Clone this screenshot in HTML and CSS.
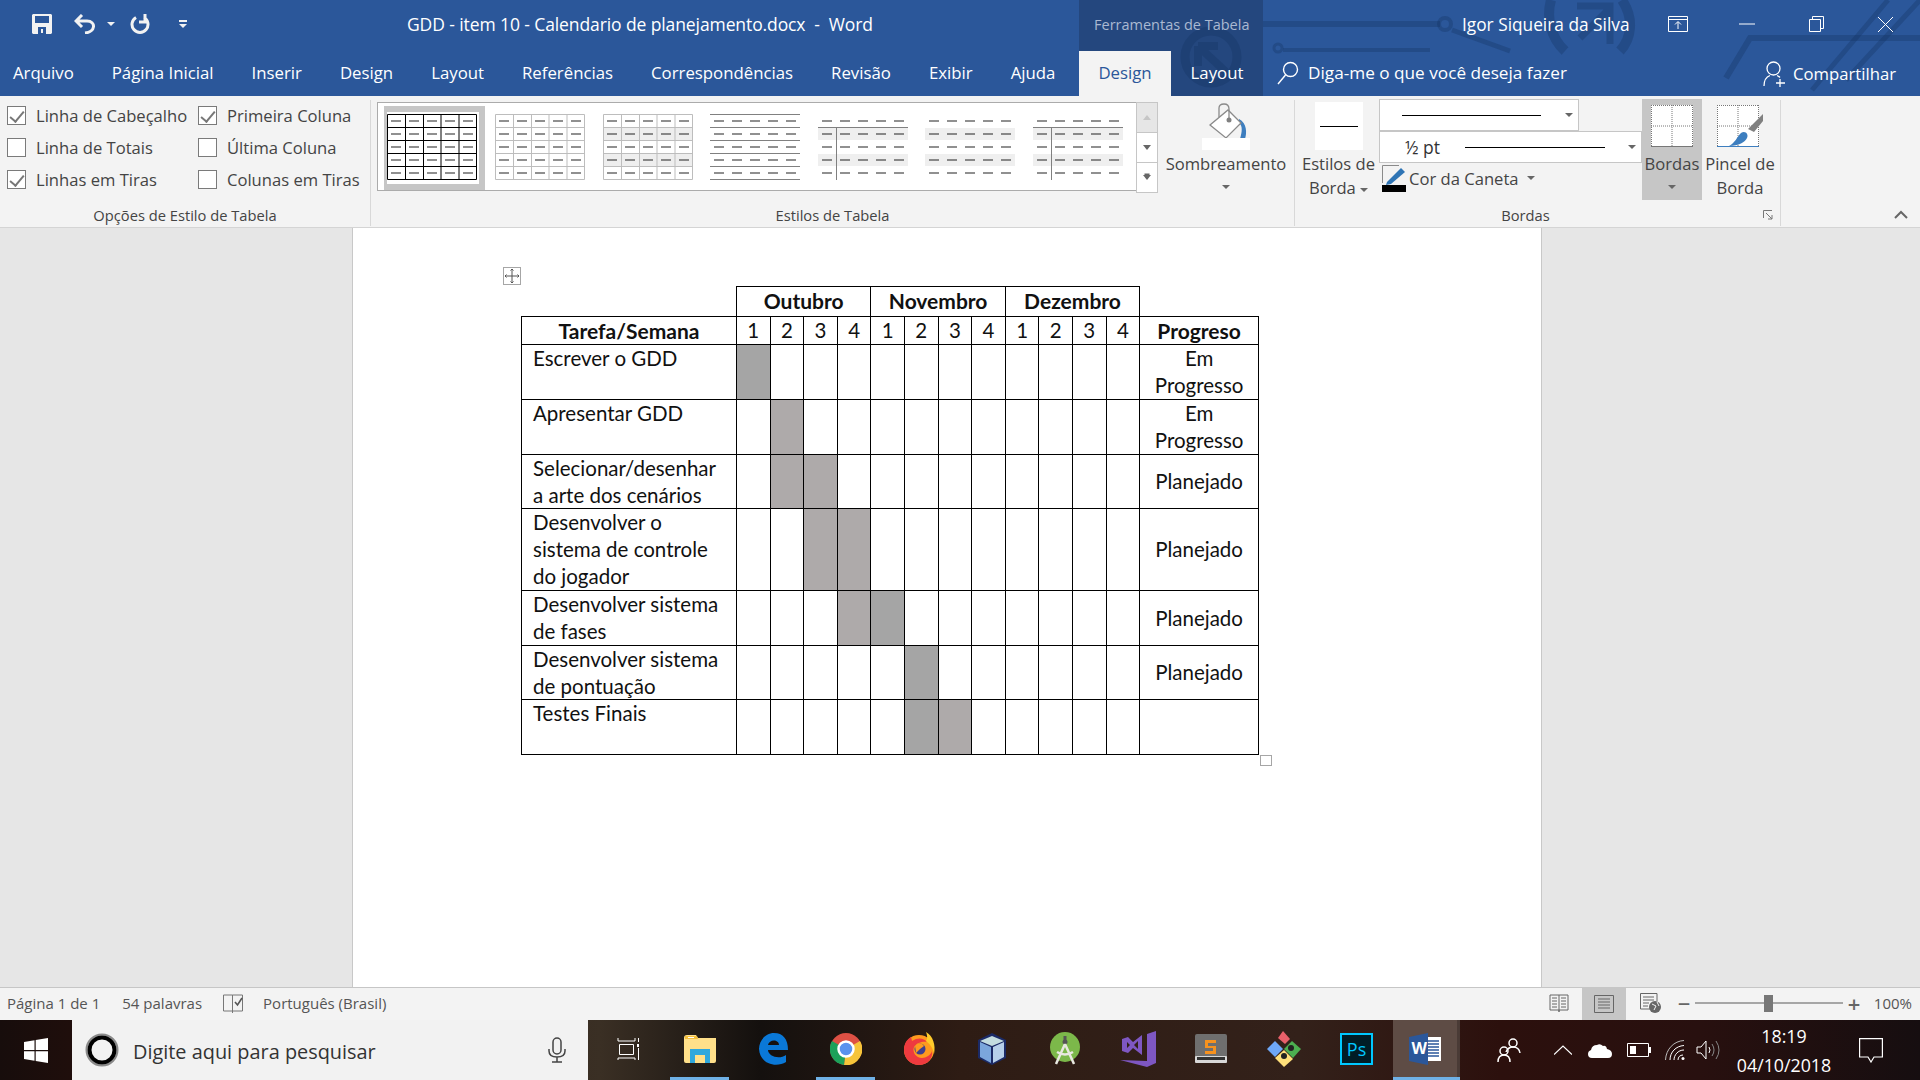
FILE: index.html
```html
<!DOCTYPE html>
<html lang="pt-BR">

<head>
    <meta charset="UTF-8">
    <title>GDD - item 10 - Calendario de planejamento.docx - Word</title>
    <link rel="stylesheet" href="styles.css">
</head>

<body>
    <svg class="defs" width="0" height="0">
        <defs>
            <symbol id="dashes" viewBox="0 0 90 66">
                <path d="M4 7H88M4 20H88M4 33H88M4 46H88M4 59H88" stroke="#222" stroke-width="1.2" stroke-dasharray="10 8" fill="none" />
            </symbol>
        </defs>
    </svg>

    <header class="head">
        <div class="ctx-bg"></div>
        <svg class="circuit" width="1920" height="96" viewBox="0 0 1920 96" fill="none" stroke="#14325f" stroke-opacity="0.32" stroke-width="5">
            <path d="M1263 24H1440" stroke-width="6" />
            <circle cx="1445" cy="24" r="6" stroke-width="4" />
            <path d="M1452 30L1510 51" />
            <circle cx="1211" cy="57" r="26" stroke-width="9" />
            <path d="M1226 72L1198 46M1198 46H1218M1198 46V66" stroke-width="8" />
            <path d="M1283 50H1430" stroke-width="4" />
            <circle cx="1278" cy="48" r="4" stroke-width="3" />
            <path d="M1551 0C1546 18 1551 38 1565 51M1622 0C1634 18 1632 38 1620 51" stroke-width="10" />
            <path d="M1577 6H1610V44M1610 8L1580 38" stroke-width="7" />
            <path d="M1920 38H1750L1726 78" stroke-width="6" />
            <path d="M1920 0L1846 80M1888 0L1812 90" stroke-width="5" />
        </svg>

        <div class="titlebar">
            <div class="qat">
                <svg class="qat-save" width="20" height="20" viewBox="0 0 20 20"><path fill="#f2f2f2" fill-rule="evenodd" d="M1 0H19L20 1V19L19 20H1L0 19V1ZM3 2V9H17V2ZM6 13V20H14V13ZM9 15H11V19H9Z" /></svg>
                <svg class="qat-undo" width="22" height="20" viewBox="0 0 22 20" fill="none" stroke="#f2f2f2" stroke-width="3"><path d="M8 1L2 7L8 13M2 7H13C22 7 22 18 11 19" /></svg>
                <span class="caret caret-light qat-caret"></span>
                <svg class="qat-redo" width="20" height="20" viewBox="0 0 20 20" fill="none" stroke="#f2f2f2" stroke-width="3"><path d="M6 3.5A8 8 0 1 0 14 3.5M15 0V8H9" /></svg>
                <span class="qat-more"></span>
            </div>
            <div class="doc-title">GDD - item 10 - Calendario de planejamento.docx&nbsp; - &nbsp;Word</div>
            <div class="ctx-title">Ferramentas de Tabela</div>
            <div class="user">Igor Siqueira da Silva</div>
            <div class="winbtns">
                <svg width="20" height="16" viewBox="0 0 20 16" fill="none" stroke="#fff"><path d="M.5.5H19.5V15.5H.5ZM.5 3.5H19.5M10 13V6M7 8.5L10 5.5L13 8.5" /></svg>
                <svg class="win-min" width="16" height="2" viewBox="0 0 16 2"><path d="M0 1H16" stroke="#fff" /></svg>
                <svg class="win-max" width="15" height="16" viewBox="0 0 15 16" fill="none" stroke="#fff"><path d="M.5 3.5H11.5V15.5H.5ZM3.5 3.5V.5H14.5V12.5H11.5" /></svg>
                <svg class="win-close" width="15" height="15" viewBox="0 0 15 15"><path d="M0 0L15 15M15 0L0 15" stroke="#fff" /></svg>
            </div>
        </div>

        <nav class="tabs">
            <div class="tabs-main">
                <span class="tab">Arquivo</span>
                <span class="tab">Página Inicial</span>
                <span class="tab">Inserir</span>
                <span class="tab">Design</span>
                <span class="tab">Layout</span>
                <span class="tab">Referências</span>
                <span class="tab">Correspondências</span>
                <span class="tab">Revisão</span>
                <span class="tab">Exibir</span>
                <span class="tab">Ajuda</span>
            </div>
            <span class="ctx-tab active">Design</span>
            <span class="ctx-tab">Layout</span>
            <div class="tell">
                <svg width="22" height="24" viewBox="0 0 22 24" fill="none" stroke="#fff" stroke-width="1.4"><circle cx="13.5" cy="8.5" r="7" /><path d="M8.5 14L1 23" /></svg>
                <span>Diga-me o que você deseja fazer</span>
            </div>
            <div class="share">
                <svg width="22" height="26" viewBox="0 0 22 26" fill="none" stroke="#fff" stroke-width="1.3"><circle cx="10.5" cy="7.5" r="6.5" /><path d="M1 25C1 19 3 16 7 14.5M14 14.5C15 15 16 15.500 17 16.500M17 18V26M13 22H22" /></svg>
                <span>Compartilhar</span>
            </div>
        </nav>
    </header>

    <section class="ribbon">
        <div class="group group-opts">
            <div class="group-body opts">
                <label class="opt"><i class="box on"></i>Linha de Cabeçalho</label>
                <label class="opt"><i class="box on"></i>Primeira Coluna</label>
                <label class="opt"><i class="box"></i>Linha de Totais</label>
                <label class="opt"><i class="box"></i>Última Coluna</label>
                <label class="opt"><i class="box on"></i>Linhas em Tiras</label>
                <label class="opt"><i class="box"></i>Colunas em Tiras</label>
            </div>
            <div class="group-label">Opções de Estilo de Tabela</div>
        </div>

        <div class="group group-styles">
            <div class="group-body styles-body">
                <div class="gallery">
                    <div class="thumb selected">
                        <svg width="90" height="66" viewBox="0 0 90 66"><path d="M.5.5H89.500V65.500H.5ZM18.500 0V66M36.500 0V66M54 0V66M72 0V66M0 13.500H90M0 26.500H90M0 39.500H90M0 52.500H90" stroke="#000" fill="none" /><use href="#dashes" /></svg>
                    </div>
                    <div class="thumb">
                        <svg width="90" height="66" viewBox="0 0 90 66"><path d="M.5.5H89.500V65.500H.5ZM18.500 0V66M36.500 0V66M54 0V66M72 0V66M0 13.500H90M0 26.500H90M0 39.500H90M0 52.500H90" stroke="#bdbdbd" fill="none" /><use href="#dashes" /></svg>
                    </div>
                    <div class="thumb">
                        <svg width="90" height="66" viewBox="0 0 90 66"><path d="M0 14H90V26H0ZM0 40H90V52H0Z" fill="#eee" /><path d="M.5.5H89.500V65.500H.5ZM18.500 0V66M36.500 0V66M54 0V66M72 0V66M0 13.500H90M0 26.500H90M0 39.500H90M0 52.500H90" stroke="#bdbdbd" fill="none" /><use href="#dashes" /></svg>
                    </div>
                    <div class="thumb">
                        <svg width="90" height="66" viewBox="0 0 90 66"><path d="M0 .5H90M0 13.500H90M0 26.500H90M0 39.500H90M0 52.500H90M0 65.500H90" stroke="#808080" fill="none" /><use href="#dashes" /></svg>
                    </div>
                    <div class="thumb">
                        <svg width="90" height="66" viewBox="0 0 90 66"><path d="M0 14H90V26H0ZM0 40H90V52H0Z" fill="#efefef" /><path d="M0 13.500H90M18.500 14V66" stroke="#808080" fill="none" /><use href="#dashes" /></svg>
                    </div>
                    <div class="thumb">
                        <svg width="90" height="66" viewBox="0 0 90 66"><path d="M0 14H90V26H0ZM0 40H90V52H0Z" fill="#efefef" /><use href="#dashes" /></svg>
                    </div>
                    <div class="thumb">
                        <svg width="90" height="66" viewBox="0 0 90 66"><path d="M18 14H90V26H18ZM0 14H18V26H0ZM18 40H90V52H18ZM0 40H18V52H0Z" fill="#efefef" /><path d="M0 13.500H90M18.500 14V66" stroke="#808080" fill="none" /><use href="#dashes" /></svg>
                    </div>
                </div>
                <div class="scroller">
                    <span class="scroll-btn off"><b class="tri up"></b></span>
                    <span class="scroll-btn"><b class="tri"></b></span>
                    <span class="scroll-btn more"><b class="tri"></b></span>
                </div>
                <div class="rbtn rbtn-shade">
                    <svg class="rbtn-icon" width="48" height="48" viewBox="0 0 48 48">
                        <path d="M37 17C45 21 45 31 43 37H38C40 30 41 24 37 21Z" fill="#3d7ebf" />
                        <path d="M8 23L26 8L39 21L24 36Z" fill="#fff" stroke="#8a8a8a" stroke-width="1.3" />
                        <path d="M17 15V6Q17 2 22 2Q27 2 27 7V17" fill="none" stroke="#8a8a8a" stroke-width="1.3" />
                        <circle cx="27" cy="18" r="2.500" fill="#808080" />
                        <rect y="36" width="48" height="12" fill="#fff" />
                    </svg>
                    <span class="rbtn-text">Sombreamento</span>
                    <span class="caret-line"><span class="caret"></span></span>
                </div>
            </div>
            <div class="group-label">Estilos de Tabela</div>
        </div>

        <div class="group group-borders">
            <div class="group-body borders-body">
                <div class="rbtn rbtn-style">
                    <div class="rbtn-icon pen-swatch"><i></i></div>
                    <span class="rbtn-text">Estilos de</span>
                    <span class="rbtn-text">Borda <span class="caret"></span></span>
                </div>
                <div class="pen-col">
                    <div class="combo combo-line"><i class="rule"></i><span class="caret"></span></div>
                    <div class="combo combo-weight"><span class="weight">½ pt</span><i class="rule"></i><span class="caret"></span></div>
                    <div class="pen-color">
                        <svg width="24" height="28" viewBox="0 0 24 28">
                            <path d="M.5 19V1.500H17" fill="none" stroke="#8a8a8a" />
                            <path d="M5 18L19 4L23 8L9 20L4 21Z" fill="#2f75b5" />
                            <path d="M0 21H24V28H0Z" fill="#000" />
                        </svg>
                        <span>Cor da Caneta</span>
                        <span class="caret"></span>
                    </div>
                </div>
                <div class="rbtn rbtn-borders">
                    <svg class="rbtn-icon" width="42" height="42" viewBox="0 0 42 42">
                        <rect width="42" height="42" fill="#fff" />
                        <path d="M.5 0V42M41.500 0V42M0 .5H42M21 0V42M0 21H42" stroke="#777" stroke-dasharray="1 1" fill="none" />
                        <path d="M0 41.500H42" stroke="#777" />
                    </svg>
                    <span class="rbtn-text">Bordas</span>
                    <span class="caret-line"><span class="caret"></span></span>
                </div>
                <div class="rbtn rbtn-brush">
                    <svg class="rbtn-icon" width="46" height="42" viewBox="0 0 46 42">
                        <rect width="42" height="41" fill="#fff" />
                        <path d="M.5 0V41M41.500 0V41M0 .5H42M21 0V41M0 21H42" stroke="#777" stroke-dasharray="1 1" fill="none" />
                        <path d="M0 41.500H42" stroke="#3d7ebf" />
                        <path d="M31 24L37 27L46 16V9Z" fill="#808080" />
                        <path d="M12 41C18 38 20 32 24 28C28 25 32 29 30 33C28 37 22 41 12 41Z" fill="#3d7ebf" />
                    </svg>
                    <span class="rbtn-text">Pincel de</span>
                    <span class="rbtn-text">Borda</span>
                </div>
            </div>
            <div class="group-label group-label-borders">
                Bordas
                <svg class="launcher" width="10" height="10" viewBox="0 0 10 10" fill="none" stroke="#777"><path d="M.5 8V.5H9M3 3L9 9M9 5V9H5" /></svg>
            </div>
        </div>

        <svg class="collapse" width="14" height="9" viewBox="0 0 14 9" fill="none" stroke="#666" stroke-width="2"><path d="M1 8L7 2L13 8" /></svg>
    </section>

    <main class="work">
        <div class="page">
            <div class="table-wrap">
                <span class="move-handle">
                    <svg width="14" height="14" viewBox="0 0 14 14" fill="none" stroke="#555"><path d="M7 0V14M0 7H14M5.500 1.500L7 0L8.500 1.500M5.500 12.500L7 14L8.500 12.500M1.500 5.500L0 7L1.500 8.500M12.500 5.500L14 7L12.500 8.500" /></svg>
                </span>
                <table class="plan">
                    <colgroup>
                        <col class="col-name"><col span="12" class="col-week"><col class="col-prog">
                    </colgroup>
                    <tr class="months">
                        <td class="blank"></td>
                        <th colspan="4">Outubro</th>
                        <th colspan="4">Novembro</th>
                        <th colspan="4">Dezembro</th>
                        <td class="blank"></td>
                    </tr>
                    <tr class="weeks">
                        <th>Tarefa/Semana</th>
                        <td>1</td><td>2</td><td>3</td><td>4</td>
                        <td>1</td><td>2</td><td>3</td><td>4</td>
                        <td>1</td><td>2</td><td>3</td><td>4</td>
                        <th>Progreso</th>
                    </tr>
                    <tr>
                        <td class="task">Escrever o GDD</td>
                        <td class="cool"></td><td></td><td></td><td></td><td></td><td></td><td></td><td></td><td></td><td></td><td></td><td></td>
                        <td class="prog">Em Progresso</td>
                    </tr>
                    <tr>
                        <td class="task">Apresentar GDD</td>
                        <td></td><td class="warm"></td><td></td><td></td><td></td><td></td><td></td><td></td><td></td><td></td><td></td><td></td>
                        <td class="prog">Em Progresso</td>
                    </tr>
                    <tr class="short">
                        <td class="task">Selecionar/desenhar a arte dos cenários</td>
                        <td></td><td class="warm"></td><td class="warm"></td><td></td><td></td><td></td><td></td><td></td><td></td><td></td><td></td><td></td>
                        <td class="prog">Planejado</td>
                    </tr>
                    <tr>
                        <td class="task">Desenvolver o sistema de controle do jogador</td>
                        <td></td><td></td><td class="warm"></td><td class="warm"></td><td></td><td></td><td></td><td></td><td></td><td></td><td></td><td></td>
                        <td class="prog">Planejado</td>
                    </tr>
                    <tr>
                        <td class="task">Desenvolver sistema de fases</td>
                        <td></td><td></td><td></td><td class="warm"></td><td class="cool"></td><td></td><td></td><td></td><td></td><td></td><td></td><td></td>
                        <td class="prog">Planejado</td>
                    </tr>
                    <tr class="short">
                        <td class="task">Desenvolver sistema de pontuação</td>
                        <td></td><td></td><td></td><td></td><td></td><td class="cool"></td><td></td><td></td><td></td><td></td><td></td><td></td>
                        <td class="prog">Planejado</td>
                    </tr>
                    <tr>
                        <td class="task last">Testes Finais</td>
                        <td></td><td></td><td></td><td></td><td></td><td class="cool"></td><td class="warm"></td><td></td><td></td><td></td><td></td><td></td>
                        <td class="prog"></td>
                    </tr>
                </table>
                <span class="size-handle"></span>
            </div>
        </div>
    </main>

    <footer class="status">
        <span class="st-page">Página 1 de 1</span>
        <span class="st-words">54 palavras</span>
        <svg class="st-proof" width="22" height="22" viewBox="0 0 22 22" fill="none" stroke="#777"><path d="M10.500 3H1.500V19H10.500ZM10.500 3H20.500V19H10.500V21" /><path d="M13 10L15.500 13L20 6" stroke="#555" stroke-width="1.600" /></svg>
        <span class="st-lang">Português (Brasil)</span>
        <div class="st-right">
            <svg class="view-read" width="20" height="20" viewBox="0 0 20 20" fill="none" stroke="#666"><path d="M10 2H1V17H10V19V2H19V17H10M3 5H8M3 8H8M3 11H8M3 14H8M12 5H17M12 8H17M12 11H17M12 14H17" /></svg>
            <span class="view-print"><svg width="20" height="18" viewBox="0 0 20 18" fill="none" stroke="#666"><path d="M.5.5H19.500V17.500H.5ZM4 4H16M4 7H16M4 10H16M4 13H16" /></svg></span>
            <svg class="view-web" width="21" height="20" viewBox="0 0 21 20" fill="none" stroke="#666"><path d="M10 16H.5V.5H17V8M3 4H14M3 7H14M3 10H9M3 13H8" /><circle cx="15" cy="14" r="6" fill="#666" stroke="none" /><path d="M12 11L16 13L14 17M17 9L19 13" stroke="#f3f3f3" /></svg>
            <div class="zoom">
                <i class="zoom-sign">−</i>
                <div class="slider"><i class="seg a"></i><i class="thumb-z"></i><i class="seg b"></i></div>
                <i class="zoom-sign plus">+</i>
            </div>
            <span class="st-zoom">100%</span>
        </div>
    </footer>

    <footer class="taskbar">
        <div class="start">
            <svg width="24" height="25" viewBox="0 0 24 25" fill="#fff"><path d="M0 4L10.500 2.300V12H0ZM11.700 2.100L24 0V12H11.700ZM0 13.200H10.500V22.800L0 21ZM11.700 13.200H24V25L11.700 23Z" /></svg>
        </div>
        <div class="search">
            <svg width="34" height="34" viewBox="0 0 34 34" fill="none"><circle cx="17" cy="17" r="15.500" stroke="#8a8a8a" stroke-width="2" /><circle cx="17" cy="17" r="12.500" stroke="#000" stroke-width="4" /></svg>
            <span class="search-text">Digite aqui para pesquisar</span>
            <svg class="mic" width="18" height="26" viewBox="0 0 18 26" fill="none" stroke="#444" stroke-width="1.500"><rect x="5" y="1" width="8" height="16" rx="4" /><path d="M1 12V14Q1 20 9 20Q17 20 17 14V12M9 20V25M4 25H14" /></svg>
        </div>
        <div class="tasks">
            <span class="task-item"><svg width="24" height="24" viewBox="0 0 24 24" fill="none" stroke="#fff"><path d="M3 1V4H20V1M4.500 7.500H18.500V17.500H4.500ZM3 23V21H20V23M23.500 1V5M23.500 11V23" /><rect x="22" y="7" width="3" height="3" fill="#fff" stroke="none" /></svg></span>
            <span class="task-item open"><svg width="32" height="28" viewBox="0 0 32 28"><path d="M0 3Q0 0 3 0H12L14 3H32V26Q32 28 30 28H2Q0 28 0 26Z" fill="#ffe08a" /><path d="M1 1H13L14 4H1Z" fill="#f4c03c" /><path d="M4 2H10V3H4Z" fill="#fff" /><path d="M6 28V14H26V28H21V20H11V28Z" fill="#2fa8dd" /></svg></span>
            <span class="task-item"><svg width="30" height="32" viewBox="0 0 30 32"><path d="M1 16C1 7 8 0 16 0C25 0 30 6 30 17H10C10 23 21 27 28 22V29C18 35 2 31 1 16ZM10 12H21C21 6 11 6 10 12Z" fill="#0a78d7" /></svg></span>
            <span class="task-item open"><svg width="32" height="32" viewBox="0 0 32 32"><circle cx="16" cy="16" r="16" fill="#dd5044" /><path d="M16 16L30 8A16 16 0 0 1 14 32Z" fill="#f6c43a" /><path d="M16 16L14 32A16 16 0 0 1 2 8Z" fill="#1ca15a" /><circle cx="16" cy="16" r="7.500" fill="#5a92ee" stroke="#fff" stroke-width="2.500" /></svg></span>
            <span class="task-item"><svg width="34" height="34" viewBox="0 0 34 34"><circle cx="17" cy="18" r="15" fill="#ff9a1f" /><path d="M2 18C2 10 6 7 9 5L10 9C16 5 22 6 25 10C22 9 15 10 12 15C10 20 14 26 20 26C24 26 29 23 30 19C31 26 26 33 17 33C8 33 2 26 2 18Z" fill="#ee3a3f" /><path d="M24 0C31 4 34 13 32 22C31 16 28 12 24 9C26 6 25 3 24 0Z" fill="#ffcb2b" /><circle cx="18" cy="17" r="5.500" fill="#3f3f8f" /><path d="M13 14C16 10 20 11 22 14L18 17L14 21Z" fill="#ff9a1f" /></svg></span>
            <span class="task-item"><svg width="32" height="34" viewBox="0 0 32 34"><path d="M16 1L30 8V26L16 33L2 26V8Z" fill="#1b2a66" /><path d="M16 4L28 9L16 14L4 9Z" fill="#c4dde0" /><path d="M4 10L15 15V31L4 25Z" fill="#7ba6dc" /><path d="M17 15L28 10V25L17 31Z" fill="#b7d0ea" /></svg></span>
            <span class="task-item"><svg width="30" height="34" viewBox="0 0 30 34"><ellipse cx="15" cy="15" rx="15" ry="15" fill="#7cb84a" /><circle cx="15" cy="10" r="2.500" fill="#555" /><path d="M15 12L6 32M15 12L24 32M7 20Q15 25 23 20" stroke="#e8e8e0" stroke-width="2.500" fill="none" /><path d="M15 4V9" stroke="#555" stroke-width="3" /></svg></span>
            <span class="task-item"><svg width="36" height="36" viewBox="0 0 36 36"><path d="M36 0V32L27 36L0 29L27 30V3Z" fill="#7e57c2" /><path d="M2 8L8 6L13 11L22 4V24L13 17L8 22L2 20ZM7 11V17L10 14ZM14 14L18 18V10Z" fill="#7e57c2" /></svg></span>
            <span class="task-item"><svg width="34" height="30" viewBox="0 0 34 30"><rect x="1" y="0" width="32" height="28" rx="2" fill="#6f6f6f" /><rect x="1" y="22" width="32" height="7" rx="1" fill="#d8d8d8" /><rect x="3" y="23" width="28" height="3" fill="#333" /><path d="M11 6H22V9H14V12H22V20H11V17H19V14H11Z" fill="#f7921e" /></svg></span>
            <span class="task-item"><svg width="36" height="36" viewBox="0 0 36 36"><path d="M18 18L26 10L35 18L27 27Z" fill="#4caf50" /><path d="M1 18L9 10L17 18L9 26Z" fill="#6ea8f7" /><path d="M18 19L27 28L18 36L9 27Z" fill="#ffe07a" /><path d="M12 7L17 0L24 8L19 13Z" fill="#e8606a" /><circle cx="25" cy="17" r="3" fill="#222" /><circle cx="18" cy="25" r="3" fill="#222" /></svg></span>
            <span class="task-item"><span class="ps-icon">Ps</span></span>
            <span class="task-item word">
                <svg width="32" height="32" viewBox="0 0 32 32"><rect x="14" y="4" width="18" height="24" fill="#fff" /><path d="M17 8H30M17 11H30M17 14H30M17 17H30M17 20H30M17 23H30" stroke="#2b579a" stroke-width="1.500" /><path d="M0 4L19 0V32L0 28Z" fill="#2b579a" /><text x="2.500" y="21" class="word-w">W</text></svg>
            </span>
        </div>
        <div class="tray">
            <svg class="tray-people" width="24" height="26" viewBox="0 0 24 26" fill="none" stroke="#fff" stroke-width="1.500"><circle cx="16" cy="6" r="4" /><path d="M9 15Q11 10 16 10Q22 10 23 16" /><circle cx="7" cy="14" r="4" /><path d="M1 25Q1 18 7 18Q13 18 13 25" /></svg>
            <svg class="tray-up" width="18" height="10" viewBox="0 0 18 10" fill="none" stroke="#fff" stroke-width="1.200"><path d="M0 9.500L9 1L18 9.500" /></svg>
            <svg class="tray-cloud" width="24" height="15" viewBox="0 0 24 15" fill="#fff"><path d="M4 15Q0 15 0 11Q0 8 3 7Q4 2 9 2Q12 0 15 3Q18 2 19 6Q24 7 24 11Q24 15 20 15Z" /></svg>
            <svg class="tray-batt" width="24" height="14" viewBox="0 0 24 14" fill="none" stroke="#fff"><path d="M.5.5H21.500V13.500H.5Z" /><rect x="3" y="3" width="6" height="8" fill="#fff" stroke="none" /><path d="M23 4V10" stroke-width="2" /></svg>
            <svg class="tray-wifi" width="20" height="20" viewBox="0 0 20 20" fill="none" stroke="#fff"><path d="M.5 20C1 9 9 1 19 .5" stroke="#bbb" /><path d="M5 20C5 12 11 6 19 5.500M9 20C9 15 13 10 19 10M13 20C13 17 15 15 18 15" /><circle cx="18" cy="18.500" r="1.500" fill="#fff" stroke="none" /></svg>
            <svg class="tray-vol" width="24" height="20" viewBox="0 0 24 20" fill="none" stroke="#fff"><path d="M1 7H5L10 1V19L5 13H1Z" /><path d="M13 7Q15 10 13 13" /><path d="M16 4Q20 10 16 16M20 1Q26 10 20 19" stroke="#888" /></svg>
            <div class="clock">
                <span>18:19</span>
                <span>04/10/2018</span>
            </div>
            <svg class="tray-note" width="24" height="25" viewBox="0 0 24 25" fill="none" stroke="#fff" stroke-width="1.200"><path d="M.6.6H23.400V19H15L12 24L9 19H.6Z" /></svg>
        </div>
    </footer>
</body>

</html>
```
FILE: styles.css
```css
* {
    box-sizing: border-box;
}

html,
body {
    margin: 0;
    height: 1080px;
    overflow: hidden;
}

body {
    display: flex;
    flex-direction: column;
    width: 1920px;
    font-family: "Open Sans", "Noto Sans", sans-serif;
    color: #444;
    background: #e6e6e6;
}

.defs {
    position: absolute;
}

.caret {
    display: inline-block;
    width: 0;
    height: 0;
    border-left: 4px solid transparent;
    border-right: 4px solid transparent;
    border-top: 4px solid #666;
    vertical-align: middle;
}

.caret-light {
    border-top-color: #f2f2f2;
}

/* title bar + tabs */
.head {
    position: relative;
    height: 96px;
    flex: none;
    background: #2b579a;
    color: #fff;
}

.ctx-bg {
    position: absolute;
    left: 1079px;
    top: 0;
    width: 184px;
    height: 96px;
    background: #24477e;
}

.circuit {
    position: absolute;
    left: 0;
    top: 0;
}

.titlebar,
.tabs {
    position: relative;
    display: flex;
    align-items: center;
}

.titlebar {
    height: 51px;
    padding-bottom: 3px;
    font-size: 17.5px;
}

.qat {
    width: 407px;
    display: flex;
    align-items: center;
    padding-left: 32px;
    height: 100%;
}

.qat-undo {
    margin-left: 22px;
}

.qat-caret {
    margin-left: 11px;
}

.qat-redo {
    margin-left: 15px;
}

.qat-more {
    margin-left: 29px;
    width: 8px;
    height: 8px;
    border-top: 2px solid #f2f2f2;
    position: relative;
}

.qat-more::after {
    content: "";
    position: absolute;
    left: 0;
    top: 2px;
    border-left: 4px solid transparent;
    border-right: 4px solid transparent;
    border-top: 4px solid #f2f2f2;
}

.doc-title {
    width: 672px;
    letter-spacing: -0.1px;
    white-space: nowrap;
}

.ctx-title {
    width: 383px;
    padding-left: 15px;
    font-size: 14.5px;
    color: #aab9d2;
}

.user {
    width: 206px;
    font-size: 17.3px;
    white-space: nowrap;
}

.winbtns {
    display: flex;
    align-items: center;
}

.win-min {
    margin-left: 51px;
}

.win-max {
    margin-left: 54px;
}

.win-close {
    margin-left: 54px;
}

.tabs {
    height: 45px;
    padding-bottom: 2px;
    font-size: 16.8px;
}

.tabs-main {
    width: 1079px;
    display: flex;
    gap: 38px;
    padding-left: 13px;
}

.ctx-tab {
    width: 92px;
    height: 45px;
    margin-bottom: -2px;
    line-height: 43px;
    text-align: center;
}

.ctx-tab.active {
    background: #f3f3f3;
    color: #2b579a;
}

.tell {
    display: flex;
    align-items: center;
    gap: 9px;
    width: 500px;
    padding-left: 14px;
    font-size: 17.2px;
}

.share {
    display: flex;
    align-items: center;
    gap: 8px;
    padding-top: 2px;
    font-size: 16.7px;
}

/* ribbon */
.ribbon {
    position: relative;
    display: flex;
    height: 132px;
    flex: none;
    background: #f3f3f3;
    border-bottom: 1px solid #d4d4d4;
    font-size: 16.6px;
}

.group {
    position: relative;
    display: flex;
    flex-direction: column;
    height: 126px;
    margin-top: 4px;
    border-right: 1px solid #d8d8d8;
}

.group-body {
    flex: 1;
    display: flex;
    min-height: 0;
}

.group-label {
    height: 24px;
    padding-top: 1px;
    line-height: 24px;
    text-align: center;
    font-size: 14.7px;
}

.group-opts {
    width: 371px;
}

.opts {
    display: grid;
    grid-template-columns: 191px 1fr;
    grid-auto-rows: 32px;
    padding-left: 7px;
    margin-top: -1px;
}

.opt {
    display: flex;
    align-items: center;
    gap: 10px;
    white-space: nowrap;
}

.box {
    position: relative;
    flex: none;
    width: 19px;
    height: 19px;
    background: #fff;
    border: 1px solid #7a7a7a;
}

.box.on::after {
    content: "";
    position: absolute;
    left: 5px;
    top: 1px;
    width: 6px;
    height: 12px;
    border-right: 2px solid #777;
    border-bottom: 2px solid #777;
    transform: rotate(40deg);
}

.group-styles {
    width: 924px;
}

.styles-body {
    padding: 2px 0 0 6px;
}

.gallery {
    display: flex;
    width: 759px;
    height: 89px;
    padding: 3px 0 0 6px;
    background: #fff;
    border: 1px solid #ababab;
    border-right: 0;
}

.thumb {
    width: 108px;
    height: 84px;
    padding: 8px 0 0 4px;
}

.thumb.selected {
    width: 102px;
    margin-right: 6px;
    background: #fff;
    border: 6px solid #c6c6c6;
    padding: 2px 0 0 0;
    border-left-width: 3px;
    border-right-width: 6px;
}

.thumb svg {
    display: block;
}

.scroller {
    display: flex;
    flex-direction: column;
    width: 22px;
    height: 90px;
}

.scroll-btn {
    flex: 1;
    display: flex;
    align-items: center;
    justify-content: center;
    background: #fff;
    border: 1px solid #c6c6c6;
    margin-bottom: -1px;
}

.scroll-btn.off {
    background: #e6e6e6;
}

.tri {
    width: 0;
    height: 0;
    border-left: 4px solid transparent;
    border-right: 4px solid transparent;
    border-top: 5px solid #666;
}

.tri.up {
    border-top: 0;
    border-bottom: 5px solid #c6c6c6;
}

.scroll-btn.more .tri {
    box-shadow: 0 -3px 0 -1.5px #666;
}

.rbtn {
    display: flex;
    flex-direction: column;
    align-items: center;
}

.rbtn-icon {
    flex: none;
}

.rbtn-text {
    height: 24px;
    line-height: 24px;
    white-space: nowrap;
}

.caret-line {
    display: flex;
    align-items: center;
    justify-content: center;
    height: 22px;
}

.rbtn-shade {
    width: 136px;
}

.rbtn-shade .rbtn-icon {
    margin-bottom: 2px;
}

.group-borders {
    width: 486px;
    border-right-color: #d8d8d8;
}

.borders-body {
    align-items: flex-start;
}

.rbtn-style {
    width: 84px;
    padding: 2px 0 0 3px;
}

.pen-swatch {
    position: relative;
    width: 48px;
    height: 48px;
    margin-bottom: 2px;
    background: #fff;
    display: flex;
    align-items: center;
    justify-content: center;
}

.pen-swatch i {
    width: 38px;
    height: 1px;
    background: #000;
}

.pen-col {
    width: 263px;
    display: flex;
    flex-direction: column;
}

.combo {
    display: flex;
    align-items: center;
    height: 32px;
    background: #fff;
    border: 1px solid #c6c6c6;
    padding-right: 5px;
}

.combo .rule {
    display: block;
    height: 1px;
    background: #000;
    width: 140px;
}

.combo-line {
    width: 200px;
    padding-left: 22px;
    margin-top: -1px;
}

.combo-line .caret {
    margin-left: 24px;
}

.combo-weight {
    width: 263px;
    padding-left: 25px;
    color: #333;
}

.combo-weight .rule {
    margin-left: 19px;
}

.combo-weight .caret {
    margin-left: 23px;
}

.weight {
    width: 41px;
    white-space: nowrap;
    font-size: 17.5px;
}

.pen-color {
    display: flex;
    align-items: center;
    height: 32px;
    padding-left: 3px;
    margin-top: -1px;
    gap: 3px;
}

.pen-color .caret {
    margin-left: 5px;
}

.rbtn-borders {
    width: 60px;
    height: 101px;
    margin-top: -1px;
    padding-top: 6px;
    background: #c6c6c6;
}

.rbtn-borders .rbtn-icon {
    margin-bottom: 5px;
}

.rbtn-brush {
    width: 76px;
    padding-top: 5px;
}

.rbtn-brush .rbtn-icon {
    margin-bottom: 5px;
}

.group-label-borders {
    padding-right: 24px;
    position: relative;
}

.launcher {
    position: absolute;
    right: 7px;
    top: 8px;
}

.collapse {
    position: absolute;
    right: 12px;
    top: 114px;
}

/* document */
.work {
    flex: 1;
    min-height: 0;
    display: flex;
    justify-content: center;
    overflow: hidden;
    margin-left: -26px;
}

.page {
    width: 1190px;
    padding: 58px 0 0 168px;
    background: #fff;
    border-left: 1px solid #c8c8c8;
    border-right: 1px solid #c8c8c8;
}

.table-wrap {
    position: relative;
    width: 738px;
}

.move-handle {
    position: absolute;
    left: -18px;
    top: -19px;
    width: 18px;
    height: 18px;
    display: flex;
    align-items: center;
    justify-content: center;
    background: #fff;
    border: 1px solid #a6a6a6;
}

.size-handle {
    position: absolute;
    right: -13px;
    bottom: -11px;
    width: 12px;
    height: 11px;
    background: #fff;
    border: 1px solid #a6a6a6;
}

.plan {
    width: 738px;
    table-layout: fixed;
    border-collapse: collapse;
    font-family: Lato, "Open Sans", sans-serif;
    font-size: 20.5px;
    line-height: 27px;
    color: #111;
}

.col-name {
    width: 215px;
}

.col-week {
    width: 33.6px;
}

.plan th,
.plan td {
    padding: 0;
    border: 1px solid #000;
    text-align: center;
    font-weight: 400;
    vertical-align: middle;
}

.plan th {
    font-size: 21px;
    font-weight: 700;
}

.plan td.blank {
    border-top: 0;
    border-left: 0;
    border-right: 0;
}

.plan td.blank:last-child {
    border-left: 1px solid #000;
}

.months th {
    height: 30px;
    padding-bottom: 2px;
}

.plan td.task {
    padding: 0 11px;
    height: 54px;
    text-align: left;
    vertical-align: top;
}

.plan td.task.last {
    height: 55px;
}

.plan .short td {
    line-height: 26.5px;
}

.plan td.prog {
    padding: 0 8px;
}

.plan td.cool {
    background: #a5a5a5;
}

.plan td.warm {
    background: #aeaaaa;
}

/* status bar */
.status {
    display: flex;
    align-items: center;
    height: 33px;
    flex: none;
    padding: 0 0 2px 7px;
    background: #f3f3f3;
    border-top: 1px solid #c6c6c6;
    font-size: 15px;
    color: #555;
}

.st-words {
    margin-left: 22px;
}

.st-proof {
    margin-left: 20px;
}

.st-lang {
    margin-left: 19px;
}

.st-right {
    margin-left: auto;
    display: flex;
    align-items: center;
    height: 32px;
    margin-bottom: -2px;
    padding: 0 8px 2px 0;
}

.view-print {
    display: flex;
    align-items: center;
    justify-content: center;
    width: 44px;
    height: 32px;
    margin: 0 0 -2px 13px;
    background: #c6c6c6;
}

.view-web {
    margin-left: 14px;
}

.zoom {
    display: flex;
    align-items: center;
    margin-left: 17px;
}

.zoom-sign {
    font-style: normal;
    font-size: 22px;
    font-weight: 600;
    color: #666;
    line-height: 1;
    width: 12px;
    text-align: center;
}

.slider {
    display: flex;
    align-items: center;
    width: 148px;
    margin: 0 5px;
}

.seg {
    height: 2px;
    background: #a6a6a6;
}

.seg.a {
    width: 69px;
}

.seg.b {
    width: 70px;
}

.thumb-z {
    width: 9px;
    height: 17px;
    background: #777;
}

.st-zoom {
    margin-left: 14px;
}

/* windows taskbar */
.taskbar {
    display: flex;
    height: 60px;
    flex: none;
    color: #fff;
    background: linear-gradient(90deg, #170d0c 0, #1f0e0c 70px, #3a2f24 600px, #14100e 760px, #2e1c14 960px, #33211a 1300px, #2c100d 1500px, #28100f 1700px, #160e10 1920px);
}

.start {
    width: 72px;
    display: flex;
    align-items: center;
    justify-content: center;
}

.search {
    width: 516px;
    display: flex;
    align-items: center;
    padding-left: 13px;
    background: #f2f2f2;
    color: #333;
    font-size: 19.9px;
}

.search-text {
    margin: 2px 0 0 14px;
}

.mic {
    margin-left: auto;
    margin-right: 22px;
}

.tasks {
    display: flex;
    margin-left: 2px;
}

.task-item {
    width: 73px;
    display: flex;
    align-items: center;
    justify-content: center;
    padding-bottom: 2px;
    position: relative;
}

.task-item.open::after {
    content: "";
    position: absolute;
    left: 7px;
    right: 7px;
    bottom: 0;
    height: 3px;
    background: #6fb1e6;
}

.ps-icon {
    width: 33px;
    height: 32px;
    display: flex;
    align-items: center;
    justify-content: center;
    background: #001d26;
    border: 2px solid #00c8ff;
    color: #00c8ff;
    font-size: 18px;
}

.task-item.word {
    width: 64px;
    background: #5e4c45;
    box-shadow: 3px 0 0 #4a3b36;
}

.task-item.word::after {
    content: "";
    position: absolute;
    left: 0;
    right: -3px;
    bottom: 0;
    height: 3px;
    background: #6fb1e6;
}

.word-w {
    font-size: 16px;
    font-weight: 700;
    fill: #fff;
}

.tray {
    display: flex;
    align-items: center;
    margin-left: 40px;
}

.tray-up {
    margin-left: 33px;
}

.tray-cloud {
    margin-left: 16px;
}

.tray-batt {
    margin-left: 15px;
}

.tray-wifi {
    margin-left: 14px;
}

.tray-vol {
    margin-left: 11px;
}

.clock {
    display: flex;
    flex-direction: column;
    align-items: center;
    gap: 5px;
    width: 100px;
    margin-left: 14px;
    font-size: 17.8px;
    line-height: 24px;
}

.tray-note {
    margin-left: 25px;
}
```
